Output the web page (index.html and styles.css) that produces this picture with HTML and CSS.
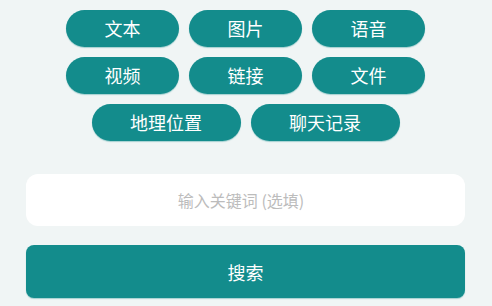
FILE: index.html
```html
<!DOCTYPE html>
<html lang="zh-CN">
<head>
<meta charset="utf-8">
<link rel="stylesheet" href="styles.css">
</head>
<body>
<div class="page">
  <div class="types">
    <button class="pill">文本</button>
    <button class="pill">图片</button>
    <button class="pill">语音</button>
    <button class="pill">视频</button>
    <button class="pill">链接</button>
    <button class="pill">文件</button>
    <button class="pill">地理位置</button>
    <button class="pill">聊天记录</button>
  </div>
  <input class="keyword" type="text" placeholder="输入关键词 (选填)">
  <button class="search">搜索</button>
</div>
</body>
</html>
```
FILE: styles.css
```css
html, body {
  margin: 0;
  padding: 0;
  background: #f0f5f5;
  font-family: "Noto Sans CJK SC", "Noto Sans", sans-serif;
}
.page {
  width: 492px;
  height: 306px;
  box-sizing: border-box;
  padding: 10px 27px 0 26px;
  display: flex;
  flex-direction: column;
}
.types {
  display: flex;
  flex-wrap: wrap;
  justify-content: center;
  gap: 10px;
}
.pill {
  height: 37px;
  padding: 0 38.5px;
  border: none;
  border-radius: 19px;
  background: #138c8c;
  color: #ffffff;
  font-family: inherit;
  font-size: 18px;
  line-height: 37px;
  box-shadow: 0 1px 1px rgba(19, 140, 140, 0.35);
}
.keyword {
  margin-top: 33px;
  height: 52px;
  box-sizing: border-box;
  padding: 0 9px 0 0;
  border: none;
  border-radius: 12px;
  background: #ffffff;
  text-align: center;
  font-family: inherit;
  font-size: 16px;
  color: #333;
  outline: none;
}
.keyword::placeholder {
  color: #bcbcbc;
}
.search {
  margin-top: 19px;
  height: 53px;
  border: none;
  border-radius: 8px;
  background: #138c8c;
  color: #ffffff;
  font-family: inherit;
  font-size: 18px;
  box-shadow: 0 1px 1px rgba(19, 140, 140, 0.35);
}
```
